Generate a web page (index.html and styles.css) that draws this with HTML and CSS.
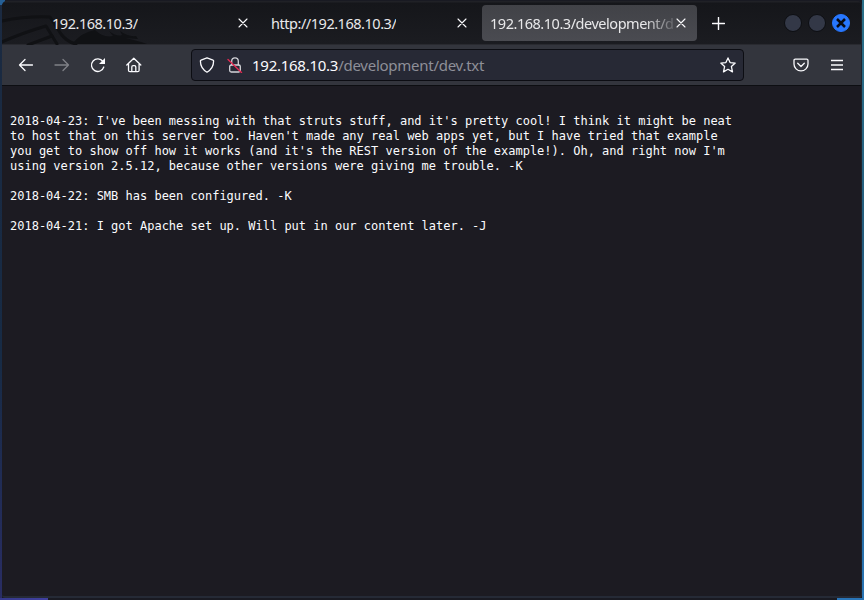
FILE: index.html
```html
<!DOCTYPE html>
<html lang="en">
<head>
<meta charset="utf-8">
<title>dev.txt</title>
<link rel="stylesheet" href="styles.css">
</head>
<body>
<div class="window">
  <header class="tabs">
    <svg class="wing" width="160" height="40" viewBox="0 0 160 40"><g fill="none" stroke="#101114" stroke-width="3"><path d="M0 16Q24 11 48 12L59 29Q65 37 74 39"/><path d="M0 37Q20 28 44 21L55 39"/><path d="M26 40L50 31"/></g><path fill="#101114" d="M93 25q8 8 18 6l-4-5q8 6 13 4l-2-4q8 6 16 5l2 3-13-1q14 3 22 6H70q10-12 23-14z"/></svg>
    <div class="tab first"><span class="label">192.168.10.3/</span><svg class="close" width="10" height="10" viewBox="0 0 10 10"><path d="M1 1l8 8M9 1l-8 8"/></svg></div>
    <div class="tab second"><span class="label">http://192.168.10.3/</span><svg class="close" width="10" height="10" viewBox="0 0 10 10"><path d="M1 1l8 8M9 1l-8 8"/></svg></div>
    <div class="tab active"><span class="label">192.168.10.3/development/dev.txt</span><svg class="close" width="10" height="10" viewBox="0 0 10 10"><path d="M1 1l8 8M9 1l-8 8"/></svg></div>
    <svg class="plus" width="13" height="13" viewBox="0 0 13 13"><path d="M6.5.5v12M.5 6.5h12"/></svg>
    <div class="controls"><i></i><i></i><i class="quit"><svg width="10" height="10" viewBox="0 0 10 10"><path d="M1 1l8 8M9 1l-8 8"/></svg></i></div>
  </header>
  <nav class="toolbar">
    <div class="nav">
      <svg width="16" height="16" viewBox="0 0 16 16"><path d="M14.500 8H1.500M7 2.500L1.500 8 7 13.500"/></svg>
      <svg class="off" width="16" height="16" viewBox="0 0 16 16"><path d="M1 8h13.500M9 2.500L14.500 8 9 13.500"/></svg>
      <svg width="16" height="16" viewBox="0 0 16 16"><path d="M13.800 10a6.300 6.300 0 1 1-.9-5.500"/><path class="solid" d="M15 1v6H9z"/></svg>
      <svg width="16" height="16" viewBox="0 0 16 16"><path d="M.8 8l7-6.700 7 6.700M2.500 7v6.200q0 1.500 1.500 1.500h7.600q1.500 0 1.500-1.500V7M5.800 14.500V10q0-1.300 1.300-1.300h1.400q1.300 0 1.300 1.300v4.500"/></svg>
    </div>
    <div class="url">
      <svg width="16" height="16" viewBox="0 0 16 16"><path d="M8 .8l6 2.400q.6.200.6.900C14.600 9 12 13 8 15.200 4 13 1.400 9 1.400 4.100q0-.7.6-.9z"/></svg>
      <svg class="lock" width="16" height="16" viewBox="0 0 16 16"><rect x="2.700" y="8" width="10.600" height="7" rx="1.500"/><path d="M4.700 7.800V4.200a3.300 3.300 0 0 1 6.600 0v3.600"/><path class="cut" d="M1 2.500l13.500 13"/></svg>
      <span class="address">192.168.10.3<span>/development/dev.txt</span></span>
      <svg class="star" width="16" height="16" viewBox="0 0 16 16"><path d="M8 .9l2.100 4.700 5.100.5-3.800 3.500 1.100 5.300L8 12.300l-4.500 2.600 1.100-5.300L.8 6.100l5.100-.5z"/></svg>
    </div>
    <svg class="pocket" width="16" height="16" viewBox="0 0 16 16"><path d="M2.300 2.200h11.400q1.300 0 1.300 1.300v3.400a7 7 0 0 1-14 0V3.500q0-1.300 1.300-1.300zM4.700 6.300L8 9.500l3.300-3.200"/></svg>
    <svg class="menu" width="12" height="12" viewBox="0 0 12 12"><path d="M0 1.500h12M0 6h12M0 10.500h12"/></svg>
  </nav>
  <main>
<pre>2018-04-23: I've been messing with that struts stuff, and it's pretty cool! I think it might be neat
to host that on this server too. Haven't made any real web apps yet, but I have tried that example
you get to show off how it works (and it's the REST version of the example!). Oh, and right now I'm
using version 2.5.12, because other versions were giving me trouble. -K

2018-04-22: SMB has been configured. -K

2018-04-21: I got Apache set up. Will put in our content later. -J</pre>
  </main>
</div>
</body>
</html>
```
FILE: styles.css
```css
* { box-sizing: border-box; }
body {
  margin: 0;
  height: 600px;
  overflow: hidden;
  padding: 1px 2px 2px;
  background:
    linear-gradient(90deg, #36398b, #4040a0) 0 598px / 48px 2px no-repeat,
    linear-gradient(#2b7089, #245b7c 40%, #2974b4) 862px 0 / 2px 600px no-repeat,
    linear-gradient(#2975b8, #2975b8) 837px 598px / 27px 2px no-repeat,
    linear-gradient(#255f95, #255f95) 0 0 / 5px 5px no-repeat,
    linear-gradient(#1b2a41, #172b45 60%, #292d63) 0 0 / 2px 598px no-repeat,
    #191a22;
}
svg { display: block; flex: none; fill: none; stroke: #fbfbfe; stroke-width: 1.3; stroke-linecap: round; stroke-linejoin: round; }
.window {
  height: 597px;
  display: flex;
  flex-direction: column;
  border-radius: 5px 5px 3px 3px;
  overflow: hidden;
  background: #1c1b22;
  border-right: 1px solid #22252e;
  border-bottom: 2px solid #252a36;
}
.tabs {
  position: relative;
  height: 43px;
  flex: none;
  display: flex;
  align-items: center;
  padding-top: 1px;
  background: linear-gradient(#202126 0 1px, #15161a 2px, #1b1c21 100%);
  font: 14.5px "Noto Sans", sans-serif;
  letter-spacing: -.47px;
  color: #e8e8ea;
}
.wing { position: absolute; left: 0; top: 4px; stroke: none; }
.tab { position: relative; flex: none; height: 36px; display: flex; align-items: center; justify-content: space-between; border-radius: 4px; }
.first { width: 255px; padding: 0 9px 0 50px; }
.second { width: 219px; padding: 0 9px 0 14px; }
.active { width: 215px; margin-left: 6px; padding: 0 11px 0 8px; background: linear-gradient(#414247, #4a4b51); }
.label { white-space: nowrap; overflow: hidden; }
.active .label { width: 184px; -webkit-mask-image: linear-gradient(90deg, #000 154px, transparent 190px); mask-image: linear-gradient(90deg, #000 154px, transparent 190px); }
.close { stroke-width: 1.1; }
.plus { margin-left: 15px; stroke-width: 1.4; }
.controls { display: flex; gap: 6px; margin-left: auto; margin-right: 11px; }
.controls i { width: 18px; height: 18px; border-radius: 50%; background: #333847; border: 1px solid #0d0e12; }
.controls .quit { display: grid; place-items: center; background: #2777ff; border-color: #2777ff; }
.quit svg { stroke: #080b14; stroke-width: 2.5; stroke-linecap: butt; }
.toolbar {
  height: 42px;
  flex: none;
  display: flex;
  align-items: center;
  background: #33353d;
  border-top: 1px solid #292a30;
  border-bottom: 1px solid #0d0e12;
}
.nav { display: flex; gap: 20px; width: 189px; padding-left: 16px; }
.off { opacity: .38; }
.solid { fill: #fbfbfe; stroke: none; }
.url {
  width: 553px;
  height: 32px;
  display: flex;
  align-items: center;
  padding: 0 7px;
  border: 1px solid #0c0d13;
  border-radius: 4px;
  background: #272935;
}
.lock { margin-left: 12px; stroke: #d5d5da; }
.lock .cut { stroke: #e22850; stroke-width: 1.4; }
.address { margin-left: 9px; font: 15px "Noto Sans", sans-serif; letter-spacing: -.26px; color: #fbfbfe; white-space: nowrap; }
.address span { color: #8e8f98; }
.star { margin-left: auto; }
.pocket { margin-left: 49px; }
.menu { margin-left: 22px; stroke-linecap: butt; }
main { flex: 1; padding: 28px 8px 0; }
pre { margin: 0; font: 12px/15px "DejaVu Sans Mono", monospace; letter-spacing: -.004px; color: #fbfbfe; }
```
